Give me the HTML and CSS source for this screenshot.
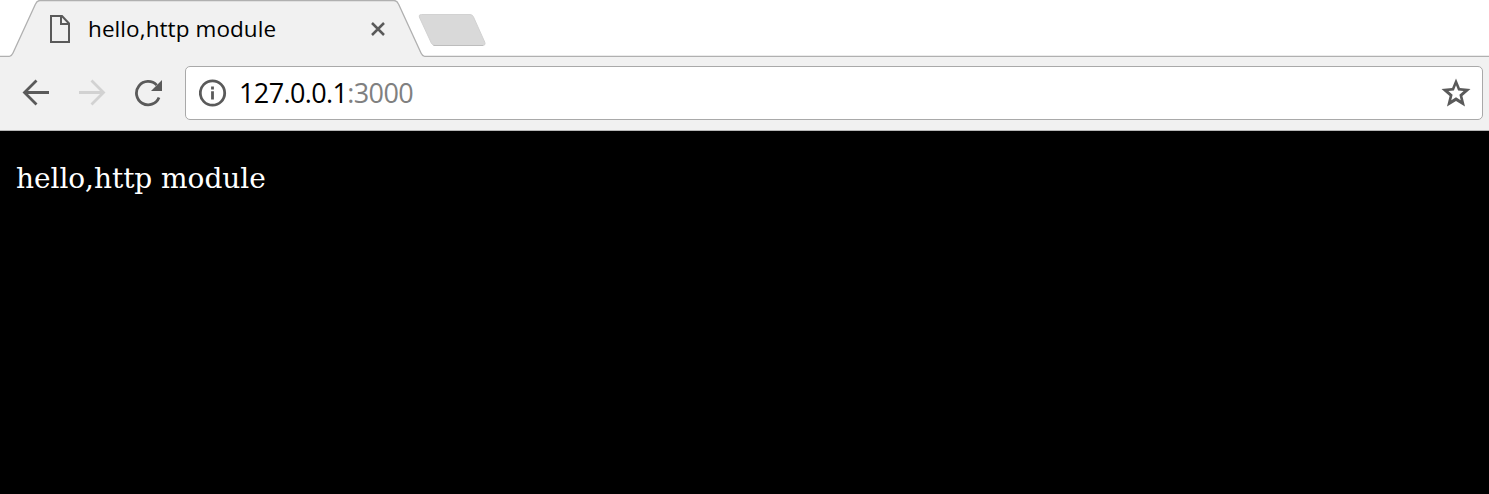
FILE: index.html
```html
<!DOCTYPE html>
<html lang="en">
<head>
<meta charset="utf-8">
<title>hello,http module</title>
<link rel="stylesheet" href="styles.css">
</head>
<body>
<header class="tabstrip">
  <svg class="tab-shapes" width="1489" height="57" viewBox="0 0 1489 57">
    <path class="tab-fill" d="M0 56.500H8Q11.500 56.500 13 53L35.500 4Q37 .5 40 .5H394Q397 .5 398.500 4L421 53Q422.500 56.500 426 56.500H1489V57H0Z"/>
    <path class="tab-line" d="M0 56.500H8Q11.500 56.500 13 53L35.500 4Q37 .5 40 .5H394Q397 .5 398.500 4L421 53Q422.500 56.500 426 56.500H1489"/>
    <path class="new-tab" d="M421.500 14.500H470Q472.500 14.500 473.500 17L484.700 42Q486 45.500 482.500 45.500H435.500Q432.500 45.500 431.300 43L419.300 17Q418.500 14.500 421.500 14.500Z"/>
    <path class="new-tab-edge" d="M433.500 45.500H483"/>
  </svg>
  <div class="tab">
    <svg class="page-icon" width="22" height="28" viewBox="0 0 22 28">
      <path d="M2 1H13L20 8.500V27H2Z M12 1V9H20"/>
    </svg>
    <span class="tab-title">hello,http module</span>
    <svg class="close-icon" width="16" height="16" viewBox="0 0 16 16"><path d="M2 2L14 14M14 2L2 14"/></svg>
  </div>
</header>
<nav class="toolbar">
  <svg class="nav-icon back" width="28" height="28" viewBox="0 0 28 28"><path d="M27 13.500H2.500M14.500 1.500L2.500 13.500L14.500 25.500"/></svg>
  <svg class="nav-icon forward" width="28" height="28" viewBox="0 0 28 28"><path d="M1 13.500H25.500M13.500 1.500L25.500 13.500L13.500 25.500"/></svg>
  <svg class="nav-icon reload" width="28" height="28" viewBox="0 0 28 28"><path d="M22.700 6.100A11.700 11.700 0 1 0 25 18.500"/><path class="solid" d="M28 1V12H17Z"/></svg>
  <div class="address">
    <svg class="info-icon" width="28" height="28" viewBox="0 0 28 28"><circle cx="13.500" cy="14" r="12.200"/><path d="M13.500 12.200V20.500M13.500 7.500V10.500"/></svg>
    <span class="url">127.0.0.1<span class="port">:3000</span></span>
    <svg class="star-icon" width="30" height="30" viewBox="0 0 30 30"><path fill-rule="evenodd" d="M15 .5L18.900 10.100L29.500 11L21.400 17.900L24 28.500L15 22.900L6 28.500L8.600 17.900L.5 11L11.100 10.100Z M15 7.300L12.900 12.500L7.400 13L11.600 16.700L10.300 22.200L15 19.300L19.700 22.200L18.400 16.700L22.600 13L17.100 12.500Z"/></svg>
  </div>
</nav>
<main class="page"><p class="message">hello,http module</p></main>
</body>
</html>
```

FILE: styles.css
```css
* { box-sizing: border-box; }
body { margin: 0; width: 1489px; height: 494px; overflow: hidden; display: flex; flex-direction: column; background: #000; }
svg { display: block; flex: none; fill: none; }
.tabstrip { position: relative; height: 57px; background: #fff; }
.tab-shapes { position: absolute; inset: 0; }
.tab-fill { fill: #f1f1f1; }
.tab-line { stroke: #b0b0b0; stroke-width: 1.300; }
.new-tab { fill: #d9d9d9; stroke: #d2d2d2; }
.new-tab-edge { stroke: #bdbdbd; }
.tab { position: relative; display: flex; align-items: center; width: 386px; height: 57px; padding: 1px 0 0 49px; }
.page-icon { stroke: #5a5a5a; stroke-width: 2; }
.tab-title { width: 299px; padding-left: 17px; font: 22.500px/30px "Open Sans", sans-serif; letter-spacing: 0.080px; color: #000; white-space: nowrap; }
.close-icon { stroke: #5a5a5a; stroke-width: 2.500; }
.toolbar { display: flex; align-items: center; height: 74px; padding: 0 6px 2px 22px; background: #f1f1f1; border-bottom: 1px solid #b6b6b6; }
.nav-icon { margin-right: 28px; stroke: #5a5a5a; stroke-width: 2.800; }
.forward { stroke: #d2d2d2; }
.reload { margin-right: 23px; }
.nav-icon .solid { fill: #5a5a5a; stroke: none; }
.address { flex: 1; display: flex; align-items: center; height: 54px; margin-top: 1px; padding: 0 11px 0 13px; border: 1px solid #a9a9a9; border-radius: 5px; background: #fff; }
.info-icon { stroke: #5a5a5a; stroke-width: 2.800; }
.url { flex: 1; padding-left: 12px; font: 27px/36px "Open Sans", sans-serif; letter-spacing: -0.620px; color: #000; white-space: nowrap; }
.port { color: #808080; }
.star-icon { fill: #5a5a5a; }
.page { flex: 1; padding: 30px 16px; background: #000; }
.message { margin: 0; font: 28px/36px "DejaVu Serif", serif; letter-spacing: -0.050px; color: #fff; white-space: nowrap; }
```
